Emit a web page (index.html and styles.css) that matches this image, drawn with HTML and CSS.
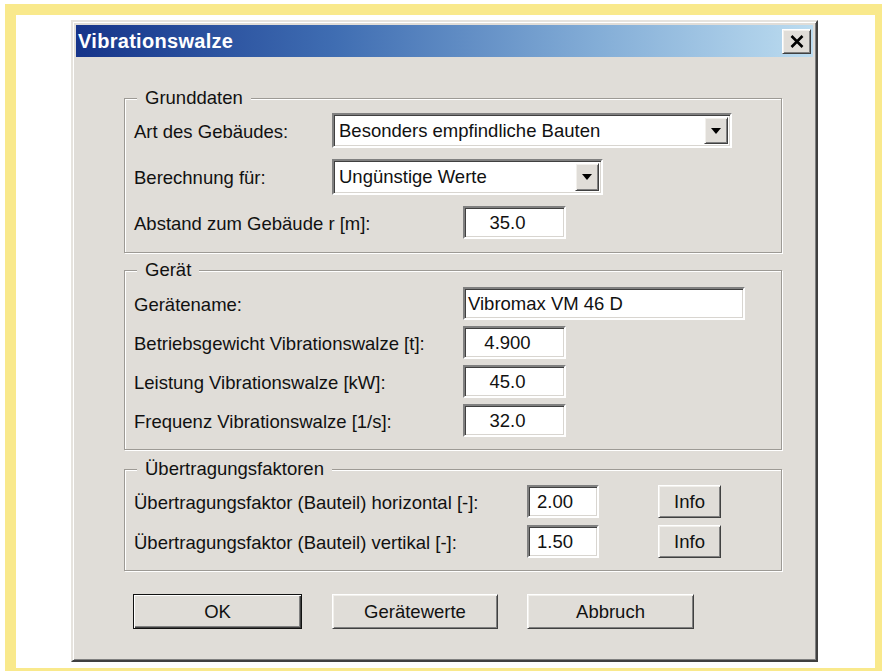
FILE: index.html
```html
<!DOCTYPE html>
<html lang="de">
<head>
<meta charset="utf-8">
<title>Vibrationswalze</title>
<link rel="stylesheet" href="styles.css">
</head>
<body>
<div class="frame">
  <div class="dialog">
    <div class="titlebar">
      <span class="title">Vibrationswalze</span>
      <button class="close raised" type="button" aria-label="Schließen">
        <svg width="14" height="13" viewBox="0 0 14 13"><path d="M1.5 1 L12.5 12 M12.5 1 L1.5 12" stroke="#000" stroke-width="2.6" fill="none"/></svg>
      </button>
    </div>
    <div class="body">
      <fieldset class="group g1">
        <legend>Grunddaten</legend>
        <div class="rows">
          <div class="row">
            <span class="lab lab-combo">Art des Gebäudes:</span>
            <div class="combo combo-wide"><span class="combo-text">Besonders empfindliche Bauten</span><span class="drop raised"><i class="arrow"></i></span></div>
          </div>
          <div class="row">
            <span class="lab lab-combo">Berechnung für:</span>
            <div class="combo combo-mid"><span class="combo-text">Ungünstige Werte</span><span class="drop raised"><i class="arrow"></i></span></div>
          </div>
          <div class="row">
            <span class="lab lab-field">Abstand zum Gebäude r [m]:</span>
            <div class="field num">35.0</div>
          </div>
        </div>
      </fieldset>

      <fieldset class="group g2">
        <legend>Gerät</legend>
        <div class="rows">
          <div class="row">
            <span class="lab lab-field">Gerätename:</span>
            <div class="field name">Vibromax VM 46 D</div>
          </div>
          <div class="row">
            <span class="lab lab-field">Betriebsgewicht Vibrationswalze [t]:</span>
            <div class="field num">4.900</div>
          </div>
          <div class="row">
            <span class="lab lab-field">Leistung Vibrationswalze [kW]:</span>
            <div class="field num">45.0</div>
          </div>
          <div class="row">
            <span class="lab lab-field">Frequenz Vibrationswalze [1/s]:</span>
            <div class="field num">32.0</div>
          </div>
        </div>
      </fieldset>

      <fieldset class="group g3">
        <legend>Übertragungsfaktoren</legend>
        <div class="rows">
          <div class="row">
            <span class="lab lab-factor">Übertragungsfaktor (Bauteil) horizontal [-]:</span>
            <div class="field small">2.00</div>
            <button class="btn raised info" type="button">Info</button>
          </div>
          <div class="row">
            <span class="lab lab-factor">Übertragungsfaktor (Bauteil) vertikal [-]:</span>
            <div class="field small">1.50</div>
            <button class="btn raised info" type="button">Info</button>
          </div>
        </div>
      </fieldset>

      <div class="actions">
        <button class="btn default ok" type="button">OK</button>
        <button class="btn raised values" type="button">Gerätewerte</button>
        <button class="btn raised cancel" type="button">Abbruch</button>
      </div>
    </div>
  </div>
</div>
</body>
</html>
```

FILE: styles.css
```css
html, body {
  margin: 0;
  overflow: hidden;
  background: #fff;
}

body {
  font-family: "Liberation Sans", Arial, sans-serif;
  font-size: 18.5px;
  color: #111;
}

/* yellow page frame around the window */
.frame {
  box-sizing: border-box;
  width: 881px;
  height: 675px;
  margin: 4px 0 0 5px;
  border: 11px solid #f9e98c;
  padding: 5px 0 0 55px;
  background: #fff;
}

/* classic 3D dialog window */
.dialog {
  box-sizing: border-box;
  width: 747px;
  height: 642px;
  background: #e0ddd8;
  border: 2px solid;
  border-color: #e6e3de #404040 #404040 #e6e3de;
  box-shadow: inset 1px 1px #fff, inset -1px -1px #808080;
  padding: 3px;
}

.titlebar {
  height: 32px;
  display: flex;
  align-items: center;
  justify-content: space-between;
  padding: 0 2px;
  background: linear-gradient(to right, #16348a 0%, #3f6db2 35%, #82acd6 70%, #bcdcf0 100%);
}

.title {
  color: #fff;
  font-weight: bold;
  font-size: 20px;
  letter-spacing: 0.3px;
}

/* raised bevel shared by buttons */
.raised {
  box-sizing: border-box;
  background: #e0ddd8;
  border: 1px solid;
  border-color: #fff #404040 #404040 #fff;
  box-shadow: inset 1px 1px #f2f0ec, inset -1px -1px #808080;
}

.close {
  width: 29px;
  height: 25px;
  padding: 0;
  display: flex;
  align-items: center;
  justify-content: center;
}

.body {
  padding: 31px 31px 0 48px;
}

/* etched group box */
.group {
  margin: 0;
  border: 1px solid #9d9a95;
  box-shadow: inset 1px 1px #fff, 1px 1px #fff;
  padding: 4px 9px 11px;
  min-width: 0;
}

.group + .group {
  margin-top: 7px;
}

.group legend {
  margin-left: 3px;
  padding: 0 8px;
  line-height: 20px;
  background: #e0ddd8;
}

.rows {
  display: flex;
  flex-direction: column;
}

.row {
  display: flex;
  align-items: center;
}

.g1 .rows { gap: 9px; }
.g1 .row { height: 37px; }

.g2 { padding-top: 6px; padding-bottom: 11px; }
.g2 .rows { gap: 4px; }
.g2 .row { height: 35px; }

.g3 { margin-top: 9px !important; padding-top: 5px; padding-bottom: 11px; }
.g3 .rows { gap: 5px; }
.g3 .row { height: 35px; }

.lab {
  flex: none;
  white-space: nowrap;
  padding-top: 2px;
}

.lab-combo { width: 198px; }
.lab-field { width: 329px; }
.lab-factor { width: 393px; }

/* sunken edit field */
.field {
  box-sizing: border-box;
  height: 33px;
  background: #fff;
  border: 2px solid;
  border-color: #808080 #fff #fff #808080;
  box-shadow: inset 1px 1px #404040, inset -1px -1px #d8d5d0;
  display: flex;
  align-items: center;
  white-space: nowrap;
}

.field.num {
  width: 103px;
  justify-content: center;
  padding-right: 14px;
}

.field.name {
  width: 282px;
  padding-left: 3px;
}

.field.small {
  width: 72px;
  padding-left: 8px;
}

/* drop-down list */
.combo {
  box-sizing: border-box;
  background: #fff;
  border: 2px solid;
  border-color: #808080 #fff #fff #808080;
  box-shadow: inset 1px 1px #404040, inset -1px -1px #d8d5d0;
  display: flex;
  align-items: center;
}

.combo-wide { width: 400px; height: 35px; }
.combo-mid { width: 271px; height: 36px; }

.combo-text {
  flex: 1;
  padding-left: 5px;
  white-space: nowrap;
}

.drop {
  width: 24px;
  height: calc(100% - 4px);
  margin-right: 2px;
  display: flex;
  align-items: center;
  justify-content: center;
}

.arrow {
  width: 0;
  height: 0;
  border-left: 5px solid transparent;
  border-right: 5px solid transparent;
  border-top: 6px solid #000;
}

.btn {
  height: 35px;
  padding: 0;
  font-family: inherit;
  font-size: 18.5px;
  color: #111;
}

.info {
  width: 63px;
  height: 33px;
  margin-left: 59px;
}

.default {
  box-sizing: border-box;
  background: #e0ddd8;
  border: 1px solid #111;
  box-shadow: inset 1px 1px #fff, inset -1px -1px #404040, inset -2px -2px #808080;
}

.actions {
  display: flex;
  gap: 30px;
  margin: 23px 0 0 9px;
}

.ok { width: 169px; }
.values { width: 166px; }
.cancel { width: 167px; margin-left: -1px; }
```
